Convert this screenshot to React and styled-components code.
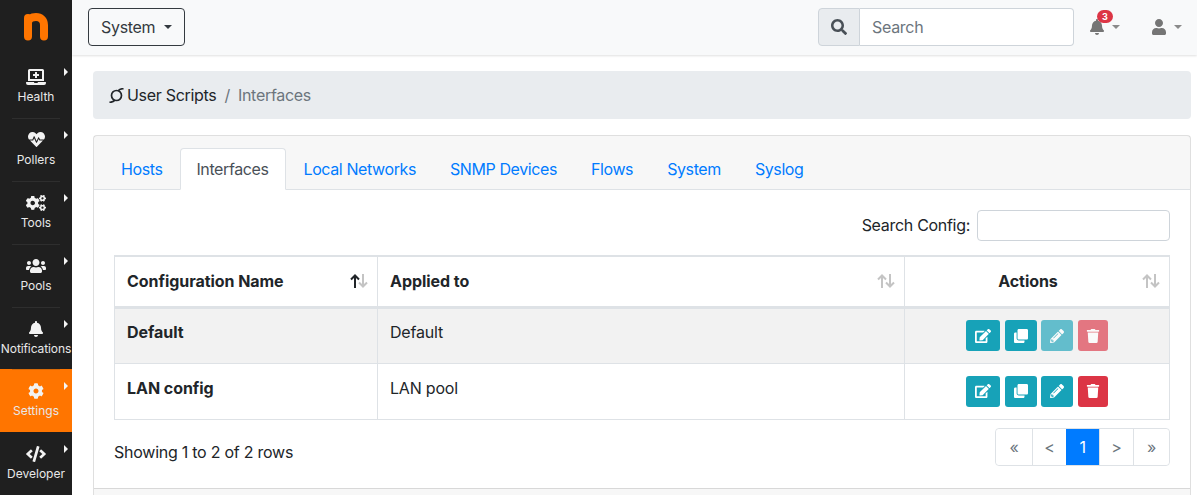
import React from "react";
import styled, { createGlobalStyle } from "styled-components";
import {
  FaLaptopMedical,
  FaHeartbeat,
  FaCogs,
  FaUsers,
  FaBell,
  FaCog,
  FaCode,
  FaSearch,
  FaUser,
  FaEdit,
  FaClone,
  FaPencilAlt,
  FaTrash,
} from "react-icons/fa";

const Global = createGlobalStyle`
  * { box-sizing: border-box; }
  html, body { margin: 0; padding: 0; height: 495px; overflow: hidden; background: #fff; }
  body {
    font-family: Inter, "Liberation Sans", sans-serif;
    font-size: 16px;
    letter-spacing: -0.3px;
    color: #212529;
  }
`;

const Layout = styled.div`
  display: flex;
  width: 1197px;
  height: 495px;
  overflow: hidden;
`;

const Sidebar = styled.nav`
  width: 72px;
  flex: none;
  background: #1f1f1f;
  display: flex;
  flex-direction: column;
`;

const Logo = styled.div`
  height: 55px;
  flex: none;
  display: flex;
  justify-content: center;
  padding-top: 13px;
`;

const NavItem = styled.div`
  position: relative;
  height: 63px;
  flex: none;
  display: flex;
  flex-direction: column;
  align-items: center;
  padding-top: 11px;
  margin-top: ${(p) => (p.$active ? "-1px" : "0")};
  color: #e8e8e8;
  background: ${(p) => (p.$active ? "#ff7500" : "transparent")};
  &::after {
    content: "";
    display: ${(p) => (p.$noLine ? "none" : "block")};
    position: absolute;
    z-index: 1;
    left: 12px;
    right: 12px;
    bottom: ${(p) => (p.$beforeActive ? "0" : "-1px")};
    height: 1px;
    background: ${(p) => (p.$beforeActive ? "#d86a08" : "#2e2e2e")};
  }
  &::before {
    content: "";
    position: absolute;
    top: 13px;
    right: 4px;
    border-left: 4px solid #f4f4f4;
    border-top: 4px solid transparent;
    border-bottom: 4px solid transparent;
  }
`;

const NavIcon = styled.span`
  height: 21px;
  display: flex;
  align-items: center;
  font-size: ${(p) => p.$size || 16}px;
  color: #f2f2f2;
`;

const NavLabel = styled.span`
  font-size: 12px;
  line-height: 16px;
  margin-top: 2px;
  white-space: nowrap;
  letter-spacing: ${(p) => (p.$tight ? "-0.1px" : "0")};
`;

const Main = styled.div`
  flex: 1;
  min-width: 0;
  display: flex;
  flex-direction: column;
`;

const Topbar = styled.header`
  height: 55px;
  flex: none;
  background: #f8f9fa;
  box-shadow: 0 1px 2px rgba(0, 0, 0, 0.12);
  display: flex;
  align-items: center;
  padding: 0 15px 1px 16px;
`;

const SystemButton = styled.div`
  height: 38px;
  display: flex;
  align-items: center;
  gap: 9px;
  padding: 0 12px;
  border: 1px solid #343a40;
  border-radius: 4px;
  color: #343a40;
  font-size: 16px;
`;

const Caret = styled.span`
  border-top: 4.8px solid ${(p) => p.$color || "#343a40"};
  border-left: 4.8px solid transparent;
  border-right: 4.8px solid transparent;
`;

const SearchGroup = styled.div`
  margin-left: auto;
  display: flex;
  width: 256px;
  height: 38px;
`;

const SearchAddon = styled.div`
  width: 42px;
  display: flex;
  align-items: center;
  justify-content: center;
  background: #e9ecef;
  border: 1px solid #ced4da;
  border-radius: 4px 0 0 4px;
  color: #495057;
  font-size: 16px;
`;

const SearchInput = styled.div`
  flex: 1;
  display: flex;
  align-items: center;
  padding: 0 12px;
  background: #fff;
  border: 1px solid #ced4da;
  border-left: 0;
  border-radius: 0 4px 4px 0;
  color: #6c757d;
  font-size: 16px;
`;

const TopIcon = styled.div`
  position: relative;
  display: flex;
  align-items: center;
  gap: 7px;
  font-size: 16px;
  color: #757575;
  margin-left: ${(p) => p.$ml}px;
`;

const Badge = styled.span`
  position: absolute;
  top: -9px;
  left: 8px;
  width: 16px;
  height: 13px;
  border-radius: 7px;
  background: #dc3545;
  color: #fff;
  font-size: 9px;
  font-weight: 700;
  line-height: 13px;
  letter-spacing: 0;
  text-align: center;
`;

const Content = styled.main`
  padding: 16px 6px 0 21px;
`;

const Breadcrumb = styled.div`
  height: 48px;
  display: flex;
  align-items: center;
  padding: 0 16px;
  background: #e9ecef;
  border-radius: 4px;
  font-size: 16px;
`;

const ScriptIcon = styled.svg`
  width: 15px;
  height: 15px;
  margin-right: 3px;
`;

const Crumb = styled.span`
  color: ${(p) => (p.$current ? "#6c757d" : "#212529")};
`;

const Slash = styled.span`
  color: #6c757d;
  padding: 0 8px;
`;

const Card = styled.section`
  margin-top: 16px;
  border: 1px solid rgba(0, 0, 0, 0.125);
  border-radius: 4px;
  background: #fff;
  height: 430px;
`;

const CardHeader = styled.div`
  height: 54px;
  background: rgba(0, 0, 0, 0.03);
  border-bottom: 1px solid #dee2e6;
  padding: 12px 11px 0;
`;

const Tabs = styled.div`
  display: flex;
  height: 42px;
`;

const Tab = styled.div`
  height: 42px;
  padding: ${(p) => (p.$active ? "0 17px 0 15px" : "0 15px")};
  display: flex;
  align-items: center;
  margin-left: ${(p) => (p.$first ? 0 : 2)}px;
  margin-right: ${(p) => (p.$active ? -1 : 0)}px;
  color: ${(p) => (p.$active ? "#495057" : "#007bff")};
  background: ${(p) => (p.$active ? "#fff" : "transparent")};
  border: 1px solid ${(p) => (p.$active ? "#dee2e6" : "transparent")};
  border-bottom-color: ${(p) => (p.$active ? "#fff" : "transparent")};
  border-radius: 4px 4px 0 0;
  font-size: 16px;
  letter-spacing: -0.4px;
`;

const CardBody = styled.div`
  padding: 20px 20px 0;
`;

const Toolbar = styled.div`
  display: flex;
  justify-content: flex-end;
  align-items: center;
  gap: 7px;
  height: 31px;
  font-size: 16px;
`;

const ToolbarLabel = styled.span`
  margin-top: -2px;
`;

const ToolbarInput = styled.div`
  width: 193px;
  height: 31px;
  border: 1px solid #ced4da;
  border-radius: 4px;
  background: #fff;
`;

const Table = styled.table`
  width: 100%;
  margin-top: 14px;
  border-collapse: collapse;
  table-layout: fixed;
  font-size: 16px;
`;

const Th = styled.th`
  position: relative;
  height: 51px;
  padding: 0 ${(p) => (p.$center ? 30 : 12)}px 0 12px;
  border: 1px solid #dee2e6;
  border-top-width: 2px;
  border-bottom-width: 3px;
  font-weight: 700;
  letter-spacing: -0.05px;
  text-align: ${(p) => (p.$center ? "center" : "left")};
`;

const SortArrows = styled.span`
  position: absolute;
  right: 9px;
  top: 17px;
  display: flex;
  line-height: 0;
`;

const Td = styled.td`
  height: 56px;
  padding: 0 12px 7px;
  border: 1px solid #dee2e6;
  font-weight: ${(p) => (p.$bold ? 700 : 400)};
  letter-spacing: ${(p) => (p.$bold ? "-0.05px" : "-0.2px")};
  text-align: ${(p) => (p.$center ? "center" : "left")};
`;

const Row = styled.tr`
  background: ${(p) => (p.$striped ? "#f2f2f2" : "#fff")};
`;

const Actions = styled.div`
  display: flex;
  justify-content: center;
  margin-top: 7px;
`;

const ActionButton = styled.span`
  width: ${(p) => p.$w}px;
  height: 31px;
  margin-left: ${(p) => p.$ml || 0}px;
  display: flex;
  align-items: center;
  justify-content: center;
  border-radius: 3px;
  color: #fff;
  font-size: 14px;
  background: ${(p) => (p.$danger ? "#dc3545" : "#17a2b8")};
  opacity: ${(p) => (p.$disabled ? 0.65 : 1)};
`;

const TableFooter = styled.div`
  display: flex;
  justify-content: space-between;
  margin-top: 8px;
`;

const RowCount = styled.div`
  padding-top: 14px;
  font-size: 16px;
  letter-spacing: -0.25px;
`;

const Pagination = styled.div`
  display: flex;
  height: 38px;
  border: 1px solid #dee2e6;
  border-radius: 4px;
`;

const PageLink = styled.div`
  width: ${(p) => p.$w}px;
  display: flex;
  align-items: center;
  justify-content: center;
  font-size: 16px;
  color: ${(p) => (p.$active ? "#fff" : "#6c757d")};
  background: ${(p) => (p.$active ? "#007bff" : "#fff")};
  border-left: ${(p) => (p.$first || p.$active ? "0" : "1px solid #dee2e6")};
  border-radius: ${(p) => (p.$first ? "4px 0 0 4px" : p.$end ? "0 4px 4px 0" : "0")};
`;

const CardFooter = styled.div`
  margin-top: 22px;
  height: 40px;
  background: rgba(0, 0, 0, 0.03);
  border-top: 1px solid rgba(0, 0, 0, 0.125);
`;

const navItems = [
  { label: "Health", icon: <FaLaptopMedical />, size: 20 },
  { label: "Pollers", icon: <FaHeartbeat />, size: 17 },
  { label: "Tools", icon: <FaCogs />, size: 20 },
  { label: "Pools", icon: <FaUsers />, size: 20 },
  { label: "Notifications", icon: <FaBell />, tight: true, beforeActive: true },
  { label: "Settings", icon: <FaCog />, active: true, noLine: true },
  { label: "Developer", icon: <FaCode />, size: 20, noLine: true },
];

const tabs = ["Hosts", "Interfaces", "Local Networks", "SNMP Devices", "Flows", "System", "Syslog"];

const rows = [
  { name: "Default", applied: "Default", locked: true },
  { name: "LAN config", applied: "LAN pool" },
];

const Arrows = ({ dark }) => (
  <SortArrows>
    <svg width="18" height="14" viewBox="0 0 18 14" fill="none" strokeWidth="2">
      <path d="M5 14V1.500M1 5.500l4-4 4 4" stroke={dark ? "#212529" : "#c4c4c4"} />
      <path d="M13 0v12.500M9 8.500l4 4 4-4" stroke="#c4c4c4" />
    </svg>
  </SortArrows>
);

export default function App() {
  return (
    <Layout>
      <Global />
      <Sidebar>
        <Logo>
          <svg width="24" height="28" viewBox="0 0 24 28">
            <path
              d="M4 23.500V5M4 10C4 6 7.500 4 12 4s8 3 8 8v11.500"
              fill="none"
              stroke="#ff7500"
              strokeWidth="8"
              strokeLinecap="round"
            />
          </svg>
        </Logo>
        {navItems.map((item) => (
          <NavItem
            key={item.label}
            $active={item.active}
            $noLine={item.noLine}
            $beforeActive={item.beforeActive}
          >
            <NavIcon $size={item.size}>{item.icon}</NavIcon>
            <NavLabel $tight={item.tight}>{item.label}</NavLabel>
          </NavItem>
        ))}
      </Sidebar>
      <Main>
        <Topbar>
          <SystemButton>
            System <Caret />
          </SystemButton>
          <SearchGroup>
            <SearchAddon>
              <FaSearch />
            </SearchAddon>
            <SearchInput>Search</SearchInput>
          </SearchGroup>
          <TopIcon $ml={15}>
            <Badge>3</Badge>
            <FaBell />
            <Caret $color="#8a8a8a" />
          </TopIcon>
          <TopIcon $ml={31}>
            <FaUser />
            <Caret $color="#8a8a8a" />
          </TopIcon>
        </Topbar>
        <Content>
          <Breadcrumb>
            <ScriptIcon viewBox="0 0 15 15" fill="none" stroke="#212529" strokeWidth="1.700">
              <circle cx="7.500" cy="7.500" r="5" />
              <path d="M.5 14.200c2.500.2 4-.5 5.500-2M14.500.8c-2.500-.2-4 .5-5.500 2" />
            </ScriptIcon>
            <Crumb>User Scripts</Crumb>
            <Slash>/</Slash>
            <Crumb $current>Interfaces</Crumb>
          </Breadcrumb>
          <Card>
            <CardHeader>
              <Tabs>
                {tabs.map((tab, i) => (
                  <Tab key={tab} $active={i === 1} $first={i === 0}>
                    {tab}
                  </Tab>
                ))}
              </Tabs>
            </CardHeader>
            <CardBody>
              <Toolbar>
                <ToolbarLabel>Search Config:</ToolbarLabel>
                <ToolbarInput />
              </Toolbar>
              <Table>
                <colgroup>
                  <col style={{ width: 263 }} />
                  <col style={{ width: 527 }} />
                  <col />
                </colgroup>
                <thead>
                  <tr>
                    <Th>
                      Configuration Name
                      <Arrows dark />
                    </Th>
                    <Th>
                      Applied to
                      <Arrows />
                    </Th>
                    <Th $center>
                      Actions
                      <Arrows />
                    </Th>
                  </tr>
                </thead>
                <tbody>
                  {rows.map((row, i) => (
                    <Row key={row.name} $striped={i === 0}>
                      <Td $bold>{row.name}</Td>
                      <Td>{row.applied}</Td>
                      <Td $center>
                        <Actions>
                          <ActionButton $w={34}>
                            <FaEdit size={16} />
                          </ActionButton>
                          <ActionButton $w={32} $ml={5}>
                            <FaClone />
                          </ActionButton>
                          <ActionButton $w={32} $ml={4} $disabled={row.locked}>
                            <FaPencilAlt />
                          </ActionButton>
                          <ActionButton $w={30} $ml={5} $danger $disabled={row.locked}>
                            <FaTrash />
                          </ActionButton>
                        </Actions>
                      </Td>
                    </Row>
                  ))}
                </tbody>
              </Table>
              <TableFooter>
                <RowCount>Showing 1 to 2 of 2 rows</RowCount>
                <Pagination>
                  <PageLink $w={36} $first>«</PageLink>
                  <PageLink $w={34}>{"<"}</PageLink>
                  <PageLink $w={33} $active>1</PageLink>
                  <PageLink $w={34}>{">"}</PageLink>
                  <PageLink $w={36} $end>»</PageLink>
                </Pagination>
              </TableFooter>
            </CardBody>
            <CardFooter />
          </Card>
        </Content>
      </Main>
    </Layout>
  );
}
